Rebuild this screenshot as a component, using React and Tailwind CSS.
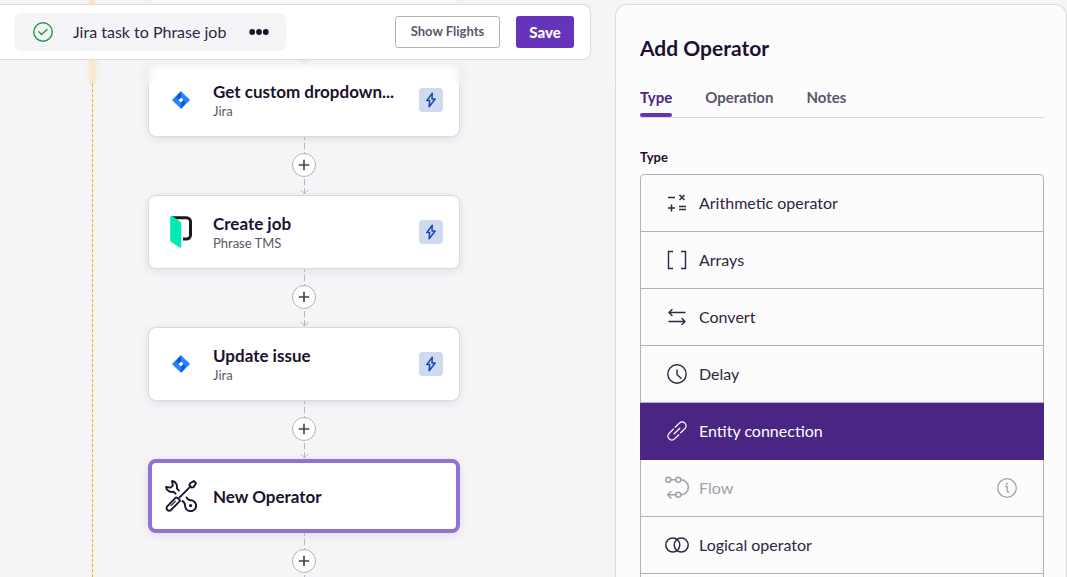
import React from "react";

function CheckCircle() {
  return (
    <svg viewBox="0 0 20 20" className="size-5 shrink-0" fill="none" stroke="#1f9a45" strokeWidth="1.4" strokeLinecap="round" strokeLinejoin="round" aria-hidden="true">
      <circle cx="10" cy="10" r="9.2" />
      <path d="M5.800 9.800 8.600 12.400 14 7.400" />
    </svg>
  );
}

function Dots() {
  return (
    <svg viewBox="0 0 20 8" className="h-2 w-5" fill="#1b1130" aria-hidden="true">
      <circle cx="3.2" cy="4" r="2.9" />
      <circle cx="10" cy="4" r="2.9" />
      <circle cx="16.8" cy="4" r="2.9" />
    </svg>
  );
}

function JiraLogo() {
  return (
    <svg viewBox="0 0 18 18" className="size-[18px]" aria-hidden="true">
      <path fill="#2684ff" fillRule="evenodd" d="M9 .2 17.4 8.3a1 1 0 0 1 0 1.4L9 17.8.6 9.7a1 1 0 0 1 0-1.4ZM9 6.5 6.5 9 9 11.5 11.5 9Z" />
      <path fill="#0a5bdc" d="M9 .2v6.3L6.7 8.8 4.4 6.4C4.300 4.800 6 2.900 9 .2Z" />
      <path fill="#0a5bdc" d="M9 17.800v-6.300l2.300-2.300 2.300 2.400c.1 1.600-1.600 3.500-4.600 6.200Z" />
    </svg>
  );
}

function PhraseLogo() {
  return (
    <svg viewBox="0 0 24 34" className="h-[34px] w-6" aria-hidden="true">
      <path fill="none" stroke="#1a1a1a" strokeWidth="3" d="M3 2.700h14.500a4 4 0 0 1 4 4V20a4 4 0 0 1-4 4H14" />
      <path fill="#00ecb4" d="M1.200 2.200c0-1.200 1.300-1.700 2.300-1L11 6.400c.8.5 1.200 1.200 1.200 2.100v23.200c0 1-.9 1.300-1.700.8L2.400 27c-.8-.5-1.200-1.200-1.200-2.100Z" />
    </svg>
  );
}

function ToolsIcon() {
  return (
    <svg viewBox="0 0 32 32" className="size-8" fill="none" stroke="#1b1130" strokeWidth="1.900" strokeLinecap="round" strokeLinejoin="round" aria-hidden="true">
      <path d="M14.300 17.700 25.300 6.700" />
      <path d="M24.300 5.200 25.200 3.200 28.800 1 31 3.200 28.800 6.800 26.800 7.700Z" />
      <path d="M10.300 18.200 2.200 26.300a3.200 3.200 0 0 0 0 3.700 3.200 3.200 0 0 0 3.800 0L14.300 21.700c.6-.6.6-1.400 0-2l-1.800-1.800c-.6-.5-1.600-.3-2.200.3Z" />
      <path d="M10.300 21.300 6 25.600" strokeWidth="1.200" />
      <path d="M14 10.600 11.800 8.400C12.800 5.300 10.800 1.600 7.400 1L7 1.200 7.800 5.600 5.600 7.600 1.200 7 1 7.400c.6 3.400 4.300 5.300 7.400 4.300l2.200 2" />
      <path d="M21.600 17.400c.8 1.700 2.200 2.800 4 2.800a5.500 5.500 0 1 1-5.500 5.500c0-2-.9-3.600-2.600-4.600" />
      <circle cx="25.600" cy="25.600" r="1.600" fill="#1b1130" stroke="none" />
    </svg>
  );
}

function Bolt() {
  return (
    <svg viewBox="0 0 12 16" className="h-4 w-3" fill="none" stroke="#1348b8" strokeWidth="1.500" strokeLinejoin="round" aria-hidden="true">
      <path d="M7.300 1.200 1.800 8.600h2.900l-.6 6.200L10.200 7H7Z" />
    </svg>
  );
}

function PlusIcon() {
  return (
    <svg viewBox="0 0 12 12" className="size-3" stroke="#444" strokeWidth="1.600" aria-hidden="true">
      <path d="M6 .8v10.400M.8 6h10.400" />
    </svg>
  );
}

function Connector() {
  return (
    <div className="relative flex h-[58px] justify-center pt-4">
      <svg viewBox="0 0 10 58" className="absolute top-0 h-[58px] w-2.5" fill="none" stroke="#b6b5bd" aria-hidden="true">
        <path d="M5.500 0v58" strokeDasharray="6 3" strokeDashoffset="3" />
        <path d="M1.500 53.500c1.500.3 3 1.500 4 3.500 1-2 2.500-3.200 4-3.500" />
      </svg>
      <button type="button" aria-label="Add step" className="relative flex size-6 items-center justify-center rounded-full border border-[#b3b2ba] bg-white">
        <PlusIcon />
      </button>
    </div>
  );
}

function StepCard({ icon, title, subtitle, selected }) {
  return (
    <article
      className={
        selected
          ? "flex h-[74px] items-center rounded-lg border-4 border-[#9370d4] bg-white pr-3 shadow-[0_2px_8px_rgba(27,17,48,0.10)]"
          : "flex h-[74px] items-center rounded-lg border border-[#dad9de] bg-white pr-4 pl-[3px] shadow-[0_2px_8px_rgba(27,17,48,0.10)]"
      }
    >
      <div className="flex w-[61px] shrink-0 items-center justify-center pr-1">{icon}</div>
      <div className="min-w-0 flex-1 pt-0.5">
        {title && <h3 className="truncate text-[17px] leading-5 font-bold text-[#1b1130]">{title}</h3>}
        {subtitle && <p className="truncate text-[13px] leading-[18px] text-[#5c566b]">{subtitle}</p>}
      </div>
      {!selected && (
        <span className="ml-4 flex size-6 shrink-0 items-center justify-center rounded bg-[#cfdaee]">
          <Bolt />
        </span>
      )}
    </article>
  );
}

const glyph = "size-6";
const ink = { fill: "none", stroke: "currentColor", strokeWidth: 1.4, strokeLinecap: "round", strokeLinejoin: "round" };

const types = [
  {
    name: "Arithmetic operator",
    icon: (
      <svg viewBox="0 0 24 24" className={glyph} {...ink} strokeLinecap="butt" strokeWidth="1.500" aria-hidden="true">
        <path d="M3 6.500h7M14.500 4 19.500 9M19.500 4 14.500 9M6.500 13.500v7M3 17h7M14 15.500h7M14 18.500h7" />
      </svg>
    ),
  },
  {
    name: "Arrays",
    icon: (
      <svg viewBox="0 0 24 24" className={glyph} {...ink} strokeLinecap="butt" strokeLinejoin="miter" aria-hidden="true">
        <path d="M8 3.500H3.500v17H8M16 3.500h4.500v17H16" />
      </svg>
    ),
  },
  {
    name: "Convert",
    icon: (
      <svg viewBox="0 0 24 24" className={glyph} {...ink} aria-hidden="true">
        <path d="M20 7.500H4.200M7 4.500l-3 3 3 3M4 16.500h15.800M17 13.500l3 3-3 3" />
      </svg>
    ),
  },
  {
    name: "Delay",
    icon: (
      <svg viewBox="0 0 24 24" className={glyph} {...ink} aria-hidden="true">
        <circle cx="12" cy="12" r="9.200" />
        <path d="M12 8v4.500l4 3.800" />
      </svg>
    ),
  },
  {
    name: "Entity connection",
    selected: true,
    icon: (
      <svg viewBox="0 0 24 24" className={glyph} {...ink} strokeWidth="1.300" aria-hidden="true">
        <path d="M9.200 14.800l5.600-5.600M10.200 8.300l4.200-4.200a3.800 3.800 0 0 1 5.500 5.500l-4.200 4.200M13.800 15.700l-4.200 4.200a3.800 3.800 0 0 1-5.500-5.500l4.200-4.200" />
      </svg>
    ),
  },
  {
    name: "Flow",
    disabled: true,
    icon: (
      <svg viewBox="0 0 24 24" className={glyph} {...ink} strokeWidth="1.500" aria-hidden="true">
        <circle cx="3.300" cy="3.800" r="2.500" />
        <circle cx="13.300" cy="3.800" r="2.500" />
        <circle cx="13.300" cy="18.800" r="2.500" />
        <path d="M5.800 3.800h5M15.800 3.800a7.500 7.500 0 0 1 0 15M10.800 18.800H2.700M6 15.500l-3.400 3.300L6 22.100" />
      </svg>
    ),
  },
  {
    name: "Logical operator",
    icon: (
      <svg viewBox="0 0 24 24" className={glyph} {...ink} strokeWidth="1.500" aria-hidden="true">
        <circle cx="7.800" cy="12" r="7" />
        <circle cx="16.200" cy="12" r="7" />
      </svg>
    ),
  },
];

function InfoIcon() {
  return (
    <svg viewBox="0 0 20 20" className="size-5" fill="none" stroke="currentColor" strokeWidth="1.300" aria-hidden="true">
      <circle cx="10" cy="10" r="9.300" />
      <path d="M8.300 8.500h1.900v4.600c0 .6.400.9 1 .9h1" />
      <circle cx="9.900" cy="5.800" r="1" fill="currentColor" stroke="none" />
    </svg>
  );
}

function TypeRow({ item }) {
  let look = "flex h-14 w-full items-center px-6 text-left text-[#2e2643]";
  if (item.disabled) look = "flex h-14 w-full items-center px-6 text-left text-[#a3a0ac]";
  if (item.selected) look = "flex h-14 w-full items-center px-[25px] text-left text-white";
  return (
    <li className={item.selected ? "-mx-px border-b border-[#4a2583] bg-[#4a2583]" : "border-b border-[#b3b2ba]"}>
      <button type="button" disabled={item.disabled} aria-pressed={Boolean(item.selected)} className={look}>
        {item.icon}
        <span className="ml-[10px] flex-1 text-base">{item.name}</span>
        {item.disabled && (
          <span className="mr-0.5">
            <InfoIcon />
          </span>
        )}
      </button>
    </li>
  );
}

function Tab({ label, active }) {
  return (
    <button
      type="button"
      role="tab"
      aria-selected={Boolean(active)}
      className={
        active
          ? "relative pb-2 text-[15px] leading-6 font-bold text-[#4a2583] after:absolute after:inset-x-0 after:bottom-0 after:h-1 after:rounded-xs after:bg-[#6633bb]"
          : "pb-2 text-[15px] leading-6 font-bold text-[#5c566b]"
      }
    >
      {label}
    </button>
  );
}

export default function App() {
  return (
    <div className="flex h-screen overflow-hidden bg-[#f5f5f8] font-[Lato,sans-serif] text-[#1b1130]">
      <main className="relative min-w-0 flex-1 overflow-hidden">
        <div className="absolute top-0 left-[90px] h-[84px] w-[5px] bg-[#fbdcae]" />
        <div className="absolute top-[84px] bottom-0 left-[92px] w-px bg-[repeating-linear-gradient(to_bottom,#ffab00_0_3px,#ffe2a6_3px_4px,transparent_4px_5px)]" />
        <div className="absolute -top-[69px] left-[148px] w-[312px]">
          <StepCard />
          <Connector />
          <StepCard icon={<JiraLogo />} title="Get custom dropdown..." subtitle="Jira" />
          <Connector />
          <StepCard icon={<PhraseLogo />} title="Create job" subtitle="Phrase TMS" />
          <Connector />
          <StepCard icon={<JiraLogo />} title="Update issue" subtitle="Jira" />
          <Connector />
          <StepCard icon={<ToolsIcon />} title="New Operator" selected />
          <Connector />
        </div>

        <div className="relative pt-1 pr-6 pb-6 backdrop-blur-[3px]">
          <header className="flex h-14 items-center rounded-r-lg border border-l-0 border-[#dad9de] bg-white pr-4 pl-[14px]">
            <div className="flex h-[38px] items-center rounded-lg bg-[#f5f5f8] pr-[17px] pl-[19px]">
              <CheckCircle />
              <h1 className="ml-5 text-base text-[#2e2643]">Jira task to Phrase job</h1>
              <button type="button" aria-label="More actions" className="ml-[23px]">
                <Dots />
              </button>
            </div>
            <button type="button" className="ml-auto h-8 w-[105px] rounded-[3px] border border-[#b3b2ba] bg-white text-[13px] font-bold text-[#5c566b]">
              Show Flights
            </button>
            <button type="button" className="ml-4 h-8 w-[58px] rounded-[3px] bg-[#6633bb] text-[15px] font-black text-white">
              Save
            </button>
          </header>
        </div>
      </main>

      <aside className="mt-1 w-[452px] shrink-0 overflow-hidden rounded-t-xl border border-b-0 border-[#dad9de] bg-[#fcfcfc] pt-[29px] pr-[22px] pl-6">
        <h2 className="text-[21px] leading-7 font-bold">Add Operator</h2>
        <div role="tablist" className="mt-[23px] flex gap-[33px] border-b border-[#dad9de]">
          <Tab label="Type" active />
          <Tab label="Operation" />
          <Tab label="Notes" />
        </div>
        <h3 id="type-label" className="mt-[29px] text-[13px] leading-5 font-bold">Type</h3>
        <ul aria-labelledby="type-label" className="mt-[7px] rounded border border-[#b3b2ba] pb-14">
          {types.map((item) => (
            <TypeRow key={item.name} item={item} />
          ))}
        </ul>
      </aside>
    </div>
  );
}
